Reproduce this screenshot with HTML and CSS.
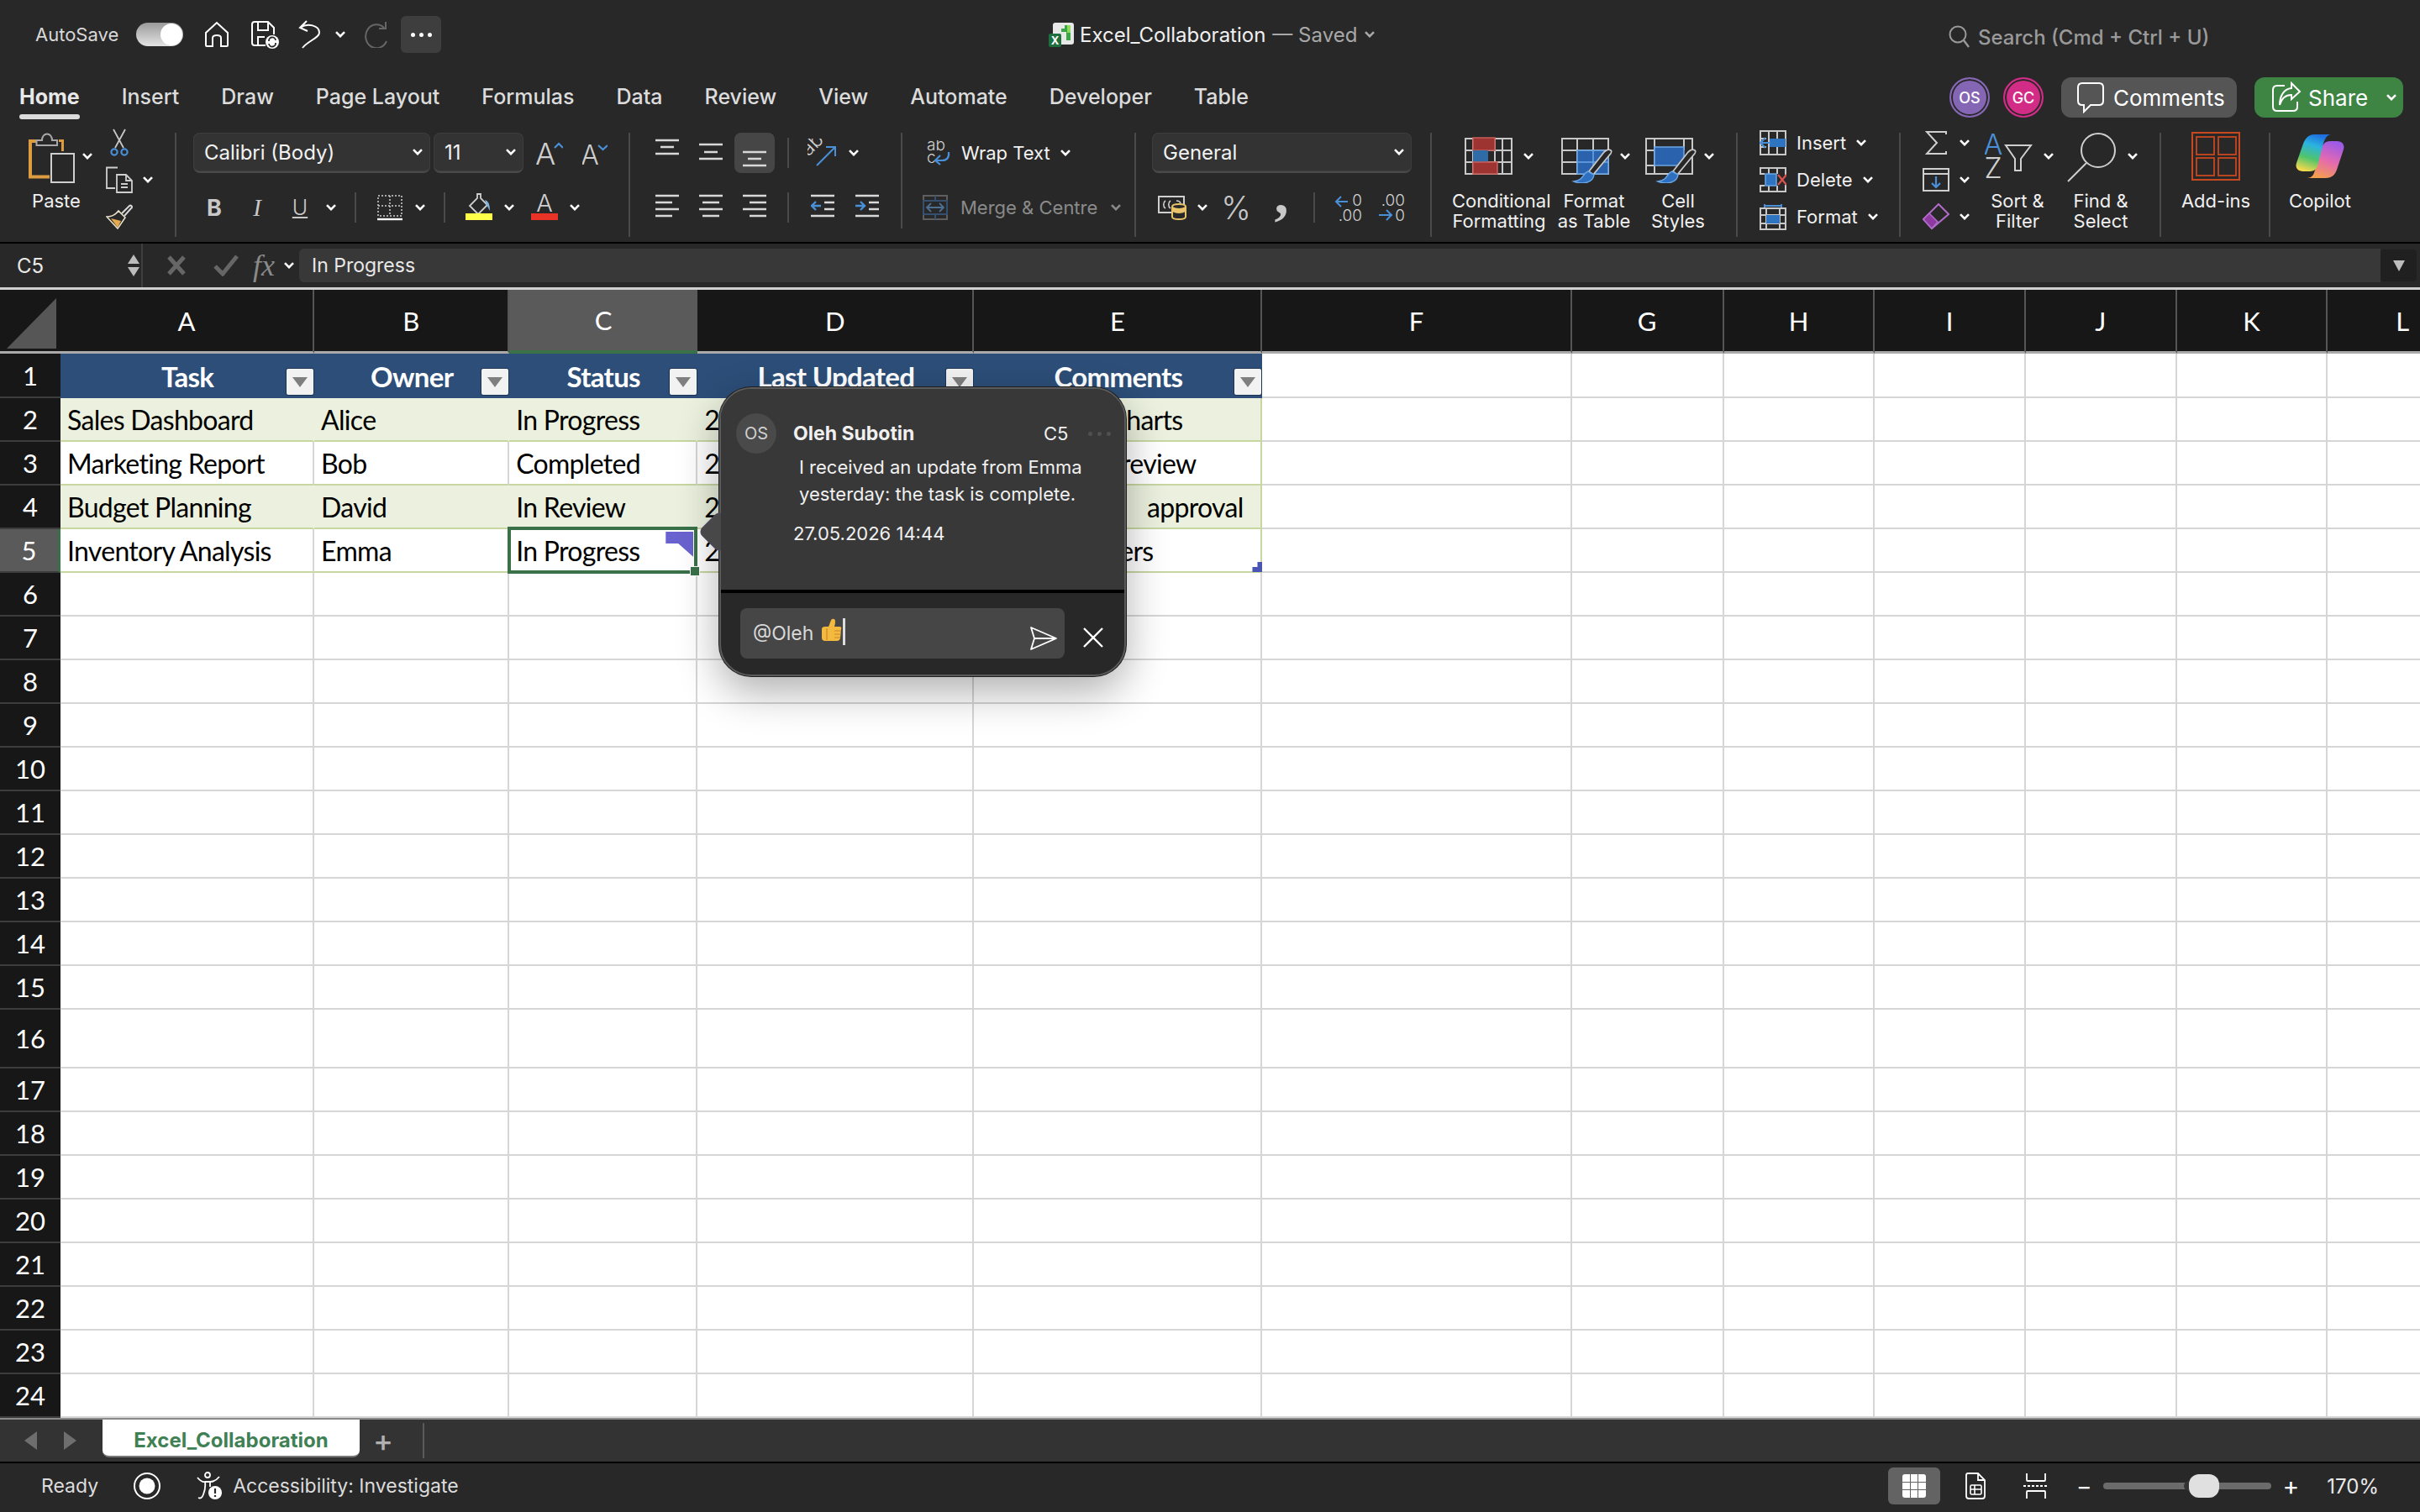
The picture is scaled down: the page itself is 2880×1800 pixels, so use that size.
FILE: index.html
```html
<!DOCTYPE html>
<html lang="en">
<head>
    <meta charset="UTF-8">
    <title>Excel_Collaboration</title>
    <link rel="stylesheet" href="styles.css">
</head>
<body>
    <svg class="defs">
        <symbol id="chev" viewBox="0 0 12 8"><path d="M1 1.2 L6 6.2 L11 1.2" fill="none" stroke="currentColor" stroke-width="2.6"/></symbol>
    </svg>

    <!-- title bar -->
    <header class="titlebar">
        <div class="qat">
            <span class="autosave">AutoSave</span>
            <span class="toggle"></span>
            <svg class="q-home" width="30" height="32" viewBox="0 0 30 32"><path d="M2 14 L15 2 L28 14 V29 Q28 30 27 30 H20 V20 Q20 17 15 17 Q10 17 10 20 V30 H3 Q2 30 2 29 Z" fill="none" stroke="#fff" stroke-width="2"/></svg>
            <svg class="q-save" width="34" height="34" viewBox="0 0 34 34"><path d="M18 30 H5 Q2 30 2 27 V5 Q2 2 5 2 H21 L28 9 V17 M9 2 V12 H21 V2 M9 30 V20 H17" fill="none" stroke="#fff" stroke-width="2"/><circle cx="26" cy="26" r="8" fill="#fff"/><path d="M22 25 A4 4 0 0 1 30 24 M30 27 A4 4 0 0 1 22 28" fill="none" stroke="#282828" stroke-width="1.8"/></svg>
            <svg class="q-undo" width="28" height="34" viewBox="0 0 28 34"><path d="M11 1 L3 9 L12 13 M3 9 C12 3 26 6 26 15 C26 21 12 25 6 33" fill="none" stroke="#fff" stroke-width="2"/></svg>
            <svg class="chev q-chev"><use href="#chev"/></svg>
            <svg class="q-redo" width="30" height="32" viewBox="0 0 30 32"><path d="M24 8 A13 14 0 1 0 27 24 M26 1 V9 H18" fill="none" stroke="#666" stroke-width="2"/></svg>
            <span class="more"><i></i><i></i><i></i></span>
        </div>
        <div class="doc-title">
            <svg width="32" height="30" viewBox="0 0 32 30"><rect x="6" y="1" width="25" height="26" rx="3" fill="#e8e8e8"/><path d="M20 4 H27 V22 H22 V12 H16 V8 H20 Z" fill="#3aa648"/><path d="M23 4 H27 V13 H23 Z" fill="#8fdc5a"/><rect x="1" y="14" width="15" height="16" rx="2" fill="#1e6e3e"/><text class="doc-x" x="8.5" y="27">X</text></svg>
            <span class="doc-name">Excel_Collaboration</span>
            <span class="doc-saved">— Saved</span>
            <svg class="chev doc-chev"><use href="#chev"/></svg>
        </div>
        <div class="search">
            <svg width="26" height="28" viewBox="0 0 26 28"><circle cx="11" cy="11" r="9.5" fill="none" stroke="#9a9a9a" stroke-width="2"/><path d="M18 18 L24 26" stroke="#9a9a9a" stroke-width="2.4"/></svg>
            <span>Search (Cmd + Ctrl + U)</span>
        </div>
    </header>

    <!-- tabs -->
    <nav class="tabs">
        <span class="tab tab-on">Home</span>
        <span class="tab">Insert</span>
        <span class="tab">Draw</span>
        <span class="tab">Page Layout</span>
        <span class="tab">Formulas</span>
        <span class="tab">Data</span>
        <span class="tab">Review</span>
        <span class="tab">View</span>
        <span class="tab">Automate</span>
        <span class="tab">Developer</span>
        <span class="tab">Table</span>
        <div class="tabs-right">
            <span class="avatar av-os">OS</span>
            <span class="avatar av-gc">GC</span>
            <span class="btn-comments">
                <svg width="34" height="38" viewBox="0 0 34 38"><path d="M7 2 H27 Q32 2 32 7 V23 Q32 28 27 28 H17 L9 36 V28 H7 Q2 28 2 23 V7 Q2 2 7 2 Z" fill="none" stroke="#fff" stroke-width="2"/></svg>
                Comments
            </span>
            <span class="btn-share">
                <svg width="36" height="38" viewBox="0 0 36 38"><path d="M16 5 H7 Q2 5 2 10 V30 Q2 35 7 35 H26 Q31 35 31 30 V24" fill="none" stroke="#fff" stroke-width="2"/><path d="M24 2 L34 12 L24 21 V16 C16 16 12 21 10 28 C10 17 15 9 24 8 Z" fill="none" stroke="#fff" stroke-width="2"/></svg>
                Share
                <svg class="chev share-chev"><use href="#chev"/></svg>
            </span>
        </div>
    </nav>

    <!-- ribbon -->
    <section class="ribbon">
        <div class="group g-clip">
            <div class="big big-paste">
                <div class="big-ic">
                    <svg width="56" height="64" viewBox="0 0 56 64"><path d="M10 14 H2 V56.5 H25" fill="none" stroke="#dd9c3f" stroke-width="4"/><path d="M36 13.5 H40.500 V26" fill="none" stroke="#dd9c3f" stroke-width="3"/><path d="M9.500 19 V13 H16 C16 3 28 3 28 13 H34 V19 Z" fill="none" stroke="#a8a8a8" stroke-width="2"/><rect x="27" y="29" width="27" height="34" fill="#282828" stroke="#cfcfcf" stroke-width="2"/></svg>
                    <svg class="chev paste-chev"><use href="#chev"/></svg>
                </div>
                <div class="big-lb">Paste</div>
            </div>
            <div class="clip-tools">
                <div class="clip-row">
                    <span class="clip-ic"><svg width="24" height="34" viewBox="0 0 24 34"><path d="M5 1 L17 23 M19 1 L7 23" stroke="#c8c8c8" stroke-width="1.8"/><circle cx="6" cy="28" r="3.600" fill="none" stroke="#4a90d9" stroke-width="2.200"/><circle cx="18" cy="28" r="3.600" fill="none" stroke="#4a90d9" stroke-width="2.200"/></svg></span>
                </div>
                <div class="clip-row">
                    <span class="clip-ic"><svg width="32" height="32" viewBox="0 0 32 32"><path d="M14 1.500 H1 V26 H11 M13 10 H24 L31 17 V31 H13 Z M24 10 V17 H31 M18 21 H26 M18 25 H26" fill="none" stroke="#cfcfcf" stroke-width="1.800"/></svg></span>
                    <svg class="chev"><use href="#chev"/></svg>
                </div>
                <div class="clip-row">
                    <span class="clip-ic"><svg width="32" height="30" viewBox="0 0 32 30"><path d="M1 15 C8 15 12 12 15 8 L23 16 C20 20 18 24 14 29 Z" fill="#282828" stroke="#e8e0c8" stroke-width="1.600"/><path d="M6 17 L18 20 L14 28 Z" fill="#e3a94c"/><path d="M19 11 L28 2 Q30 1 31 3 Q31 5 30 5 L22 14" fill="none" stroke="#d8d8d8" stroke-width="2"/></svg></span>
                </div>
            </div>
        </div>

        <div class="group g-font">
            <div class="r1">
                <span class="select sel-font">Calibri (Body)<svg class="chev"><use href="#chev"/></svg></span>
                <span class="select sel-size">11<svg class="chev"><use href="#chev"/></svg></span>
                <svg class="grow" width="32" height="36" viewBox="0 0 32 36"><text class="ict-a" x="11" y="32">A</text><path d="M22 12 L27 7 L32 12" fill="none" stroke="#4a90d9" stroke-width="2.200"/></svg>
                <svg class="shrink" width="30" height="32" viewBox="0 0 30 32"><text class="ict-a2" x="9" y="30">A</text><path d="M19 7 L24.500 12 L30 7" fill="none" stroke="#4a90d9" stroke-width="2.200"/></svg>
            </div>
            <div class="r2">
                <span class="tb w50 t-b">B</span>
                <span class="tb w52 t-i">I</span>
                <span class="tb w50 t-u"><u>U</u></span>
                <span class="tb w24"><svg class="chev"><use href="#chev"/></svg></span>
                <span class="tb w34"><i class="vsep"></i></span>
                <span class="tb w48"><svg width="30" height="32" viewBox="0 0 30 32"><path d="M1 2 H29 V26 H1 Z M15 2 V26 M1 14 H29" fill="none" stroke="#cfcfcf" stroke-width="1.500" stroke-dasharray="2 2"/><path d="M0 30 H30" stroke="#fff" stroke-width="2.400"/></svg></span>
                <span class="tb w24"><svg class="chev"><use href="#chev"/></svg></span>
                <span class="tb w34"><i class="vsep"></i></span>
                <span class="tb w48"><svg width="32" height="34" viewBox="0 0 32 34"><path d="M14 1 H18 V6 L26 14 L15 25 L5 15 L14 6 Z" fill="none" stroke="#cfcfcf" stroke-width="1.800"/><path d="M23 8 Q29 9 29 21 Q25 15 23 8 Z" fill="#7fb3e0"/><rect y="24" width="32" height="8" fill="#ffff4a"/></svg></span>
                <span class="tb w24"><svg class="chev"><use href="#chev"/></svg></span>
                <span class="tb w52 mg4"><svg width="32" height="34" viewBox="0 0 32 34"><text class="ict-a3" x="16" y="22">A</text><rect y="24" width="32" height="8" fill="#e93326"/></svg></span>
                <span class="tb w24 mg-4"><svg class="chev"><use href="#chev"/></svg></span>
            </div>
        </div>

        <div class="group g-align">
            <div class="r1">
                <span class="tb-h w52"><svg width="28" height="48" viewBox="0 0 28 48"><path d="M0 9 H28 M6 17 H22 M0 25 H28" stroke="#d8d8d8" stroke-width="2.400"/></svg></span>
                <span class="tb-h w52"><svg width="28" height="48" viewBox="0 0 28 48"><path d="M0 14 H28 M6 23 H22 M0 31 H28" stroke="#d8d8d8" stroke-width="2.400"/></svg></span>
                <span class="tb-h w52"><span class="active"><svg width="28" height="48" viewBox="0 0 28 48"><path d="M0 23 H28 M6 31 H22 M0 39 H28" stroke="#d8d8d8" stroke-width="2.400"/></svg></span></span>
                <span class="tb-h w28"><i class="vsep"></i></span>
                <span class="tb-h w52"><svg width="34" height="34" viewBox="0 0 34 34"><text class="ict-ab" transform="translate(1 22) rotate(-45)">ab</text><path d="M11 32 L32 11 M22 10 H33 V21" fill="none" stroke="#4a90d9" stroke-width="2"/></svg></span>
                <span class="tb-h w24"><svg class="chev"><use href="#chev"/></svg></span>
            </div>
            <div class="r2">
                <span class="tb w52"><svg width="28" height="46" viewBox="0 0 28 46"><path d="M0 9 H28 M0 17 H20 M0 25 H28 M0 33 H20" stroke="#d8d8d8" stroke-width="2.400"/></svg></span>
                <span class="tb w52"><svg width="28" height="46" viewBox="0 0 28 46"><path d="M0 9 H28 M4 17 H24 M0 25 H28 M4 33 H24" stroke="#d8d8d8" stroke-width="2.400"/></svg></span>
                <span class="tb w52"><svg width="28" height="46" viewBox="0 0 28 46"><path d="M0 9 H28 M8 17 H28 M0 25 H28 M8 33 H28" stroke="#d8d8d8" stroke-width="2.400"/></svg></span>
                <span class="tb w28"><i class="vsep"></i></span>
                <span class="tb w54"><svg width="28" height="46" viewBox="0 0 28 46"><path d="M0 9 H28 M16 17 H28 M16 25 H28 M0 33 H28" stroke="#d8d8d8" stroke-width="2.400"/><path d="M12 21 H1 M6 16 L1 21 L6 26" fill="none" stroke="#4a90d9" stroke-width="2.400"/></svg></span>
                <span class="tb w52"><svg width="28" height="46" viewBox="0 0 28 46"><path d="M0 9 H28 M16 17 H28 M16 25 H28 M0 33 H28" stroke="#d8d8d8" stroke-width="2.400"/><path d="M0 21 H11 M6 16 L11 21 L6 26" fill="none" stroke="#4a90d9" stroke-width="2.400"/></svg></span>
            </div>
        </div>

        <div class="group g-wrap">
            <div class="wrap-row wr-1">
                <svg width="28" height="30" viewBox="0 0 28 30"><text class="ict-wrap" x="0" y="12">ab</text><text class="ict-wrap" x="0" y="27">c</text><path d="M26 14 Q27 24 18 24 H11 M16 18 L10 24 L16 29" fill="none" stroke="#4a90d9" stroke-width="2.200"/></svg>
                <span>Wrap Text</span>
                <svg class="chev"><use href="#chev"/></svg>
            </div>
            <div class="wrap-row wr-2">
                <svg width="30" height="30" viewBox="0 0 30 30"><rect x="1" y="1" width="28" height="28" fill="none" stroke="#5e5e5e" stroke-width="2"/><path d="M15 1 V7 M15 23 V29 M1 7 H29 V23 H1 Z" fill="none" stroke="#35506e" stroke-width="2"/><path d="M5 15 H25 M10 10 L5 15 L10 20 M20 10 L25 15 L20 20" fill="none" stroke="#4c6f94" stroke-width="1.800"/></svg>
                <span>Merge &amp; Centre</span>
                <svg class="chev"><use href="#chev"/></svg>
            </div>
        </div>

        <div class="group g-num">
            <div class="r1">
                <span class="select sel-num">General<svg class="chev"><use href="#chev"/></svg></span>
            </div>
            <div class="r2">
                <span class="tb w48"><svg width="34" height="30" viewBox="0 0 34 30"><rect x="1" y="2" width="30" height="19" fill="none" stroke="#cfcfcf" stroke-width="2"/><path d="M9 7 A4 5 0 0 0 9 16 M15 7 A4 5 0 0 0 15 16 M22 7 Q26 7 27 10" fill="none" stroke="#cfcfcf" stroke-width="1.600"/><path d="M17 14 Q17 11 25 11 Q33 11 33 14 V26 Q33 29 25 29 Q17 29 17 26 Z" fill="#282828" stroke="#e8c36a" stroke-width="2"/><path d="M17 14 Q25 18 33 14 V20 Q25 24 17 20 Z" fill="#e8c36a"/></svg></span>
                <span class="tb w24"><svg class="chev"><use href="#chev"/></svg></span>
                <span class="tb w56 t-pct">%</span>
                <span class="tb w52 t-comma">,</span>
                <span class="tb w26"><i class="vsep"></i></span>
                <span class="tb w56"><svg width="34" height="34" viewBox="0 0 34 34"><text class="ict-dec" x="33" y="15" text-anchor="end">0</text><text class="ict-dec" x="33" y="33" text-anchor="end">.00</text><path d="M16 10 H2 M8 4 L2 10 L8 16" fill="none" stroke="#4a90d9" stroke-width="2"/></svg></span>
                <span class="tb w46"><svg width="34" height="34" viewBox="0 0 34 34"><text class="ict-dec" x="33" y="15" text-anchor="end">.00</text><text class="ict-dec" x="33" y="33" text-anchor="end">0</text><path d="M2 26 H17 M11 20 L17 26 L11 32" fill="none" stroke="#4a90d9" stroke-width="2"/></svg></span>
            </div>
        </div>

        <div class="group g-styles">
            <div class="big big-cf">
                <div class="big-ic">
                    <svg width="58" height="64" viewBox="0 0 58 64"><path d="M1 11 H56 V53 H1 Z M10 11 V53 M36 11 V53 M45 11 V53 M1 25 H56 M1 39 H56" fill="none" stroke="#c8c8c8" stroke-width="2"/><rect x="10" y="10" width="26" height="15" fill="#9d3431" stroke="#c85f5a" stroke-width="1.500"/><rect x="10" y="25" width="18" height="14" fill="#2f6ba6"/><rect x="10" y="39" width="29" height="14" fill="#9d3431" stroke="#c85f5a" stroke-width="1.500"/></svg>
                    <svg class="chev"><use href="#chev"/></svg>
                </div>
                <div class="big-lb">Conditional<br>Formatting</div>
            </div>
            <div class="big big-fat">
                <div class="big-ic">
                    <svg width="62" height="64" viewBox="0 0 62 64"><path d="M1 11 H56 V53 H1 Z M19 11 V53 M38 11 V53 M1 25 H56 M1 39 H56" fill="none" stroke="#c8c8c8" stroke-width="2"/><rect x="19" y="25" width="37" height="28" fill="#2a62ad" stroke="#6aa7e6" stroke-width="1.500"/><path d="M19 39 H56 M38 25 V53" stroke="#6aa7e6" stroke-width="1.500"/><path d="M59 25 C56 23 53 25 51 27 L33 50 L38 54 L57 31 C59 29 61 27 59 25 Z" fill="#282828" stroke="#c8c8c8" stroke-width="1.800"/><path d="M32 50 C25 52 28 60 15 62 C25 66 38 64 39 54 Z" fill="#2f6fc0" stroke="#6aa7e6" stroke-width="1.500"/></svg>
                    <svg class="chev"><use href="#chev"/></svg>
                </div>
                <div class="big-lb">Format<br>as Table</div>
            </div>
            <div class="big big-fat">
                <div class="big-ic">
                    <svg width="62" height="64" viewBox="0 0 62 64"><path d="M1 11 H56 V53 H1 Z M11 11 V53 M46 11 V25 M1 25 H11 M1 43 H11" fill="none" stroke="#c8c8c8" stroke-width="2"/><rect x="11" y="21" width="35" height="22" fill="#2a62ad" stroke="#6aa7e6" stroke-width="1.500"/><path d="M59 25 C56 23 53 25 51 27 L33 50 L38 54 L57 31 C59 29 61 27 59 25 Z" fill="#282828" stroke="#c8c8c8" stroke-width="1.800"/><path d="M32 50 C25 52 28 60 15 62 C25 66 38 64 39 54 Z" fill="#2f6fc0" stroke="#6aa7e6" stroke-width="1.500"/></svg>
                    <svg class="chev"><use href="#chev"/></svg>
                </div>
                <div class="big-lb">Cell<br>Styles</div>
            </div>
        </div>

        <div class="group g-cells">
            <div class="cell-row">
                <svg width="32" height="30" viewBox="0 0 32 30"><path d="M1 1 H31 V29 H1 Z M11 1 V29 M21 1 V29 M1 10 H8 M1 20 H8" fill="none" stroke="#c8c8c8" stroke-width="2"/><rect x="12" y="10" width="19" height="10" fill="#2f74c0"/><path d="M13 15 H1 M7 9 L1 15 L7 21" fill="#282828" stroke="#4a90d9" stroke-width="2.200"/></svg>
                <span>Insert</span>
                <svg class="chev"><use href="#chev"/></svg>
            </div>
            <div class="cell-row">
                <svg width="32" height="30" viewBox="0 0 32 30"><path d="M1 9 V1 H31 V9 M1 21 V29 H31 V21 M11 1 V8 M21 1 V8 M11 22 V29 M21 22 V29 M1 8 H6 M1 22 H6" fill="none" stroke="#c8c8c8" stroke-width="2"/><rect x="7" y="8" width="13" height="14" fill="#2f74c0" stroke="#6aa7e6" stroke-width="1.500"/><path d="M22 9 L32 21 M32 9 L22 21" stroke="#d9524c" stroke-width="2.200"/></svg>
                <span>Delete</span>
                <svg class="chev"><use href="#chev"/></svg>
            </div>
            <div class="cell-row">
                <svg width="32" height="32" viewBox="0 0 32 32"><path d="M1 6 H31 V31 H1 Z M8 6 V31 M24 6 V31 M1 14 H31 M1 24 H31" fill="none" stroke="#c8c8c8" stroke-width="2"/><rect x="8" y="14" width="16" height="10" fill="#2f74c0"/><path d="M6 1 V5 M26 1 V5 M6 3 H26" stroke="#4a90d9" stroke-width="2"/></svg>
                <span>Format</span>
                <svg class="chev"><use href="#chev"/></svg>
            </div>
        </div>

        <div class="group g-edit">
            <div class="edit-col">
                <div class="edit-row">
                    <span class="edit-ic"><svg width="26" height="30" viewBox="0 0 26 30"><path d="M25 5 V2 H2 L14 15 L2 28 H25 V25" fill="none" stroke="#cfcfcf" stroke-width="2"/></svg></span>
                    <svg class="chev"><use href="#chev"/></svg>
                </div>
                <div class="edit-row">
                    <span class="edit-ic"><svg width="32" height="28" viewBox="0 0 32 28"><rect x="1" y="1" width="30" height="26" fill="none" stroke="#cfcfcf" stroke-width="2"/><path d="M1 7 H31" stroke="#cfcfcf" stroke-width="2"/><path d="M16 10 V23 M11 18 L16 23 L21 18" fill="none" stroke="#4a90d9" stroke-width="2.200"/></svg></span>
                    <svg class="chev"><use href="#chev"/></svg>
                </div>
                <div class="edit-row">
                    <span class="edit-ic"><svg width="32" height="32" viewBox="0 0 32 32"><path d="M19 1 L31 13 L11 30 L1 19 Z" fill="none" stroke="#b06cc8" stroke-width="2"/><path d="M1 19 L8 12 L18 22 L11 30 Z" fill="#8e3aa0" stroke="#b06cc8" stroke-width="1.500"/></svg></span>
                    <svg class="chev"><use href="#chev"/></svg>
                </div>
            </div>
            <div class="big big-sort">
                <div class="big-ic">
                    <svg width="58" height="64" viewBox="0 0 58 64"><text class="ict-az" x="10" y="30">A</text><text class="ict-z" x="10" y="58">Z</text><path d="M25 19 H55 L43 35 V49 H36 V35 Z" fill="none" stroke="#cfcfcf" stroke-width="2"/></svg>
                    <svg class="chev"><use href="#chev"/></svg>
                </div>
                <div class="big-lb">Sort &amp;<br>Filter</div>
            </div>
            <div class="big big-find">
                <div class="big-ic">
                    <svg width="60" height="64" viewBox="0 0 60 64"><circle cx="37" cy="25" r="20" fill="none" stroke="#cfcfcf" stroke-width="2"/><path d="M23 40 L1 62" stroke="#cfcfcf" stroke-width="2"/></svg>
                    <svg class="chev"><use href="#chev"/></svg>
                </div>
                <div class="big-lb">Find &amp;<br>Select</div>
            </div>
        </div>

        <div class="group g-addins">
            <div class="big big-one">
                <div class="big-ic">
                    <svg width="58" height="64" viewBox="0 0 58 64"><rect x="1" y="4" width="56" height="56" fill="none" stroke="#c8481f" stroke-width="2"/><rect x="6" y="9" width="21" height="21" fill="none" stroke="#c8481f" stroke-width="1.800"/><rect x="32" y="9" width="21" height="21" fill="none" stroke="#c8481f" stroke-width="1.800"/><rect x="6" y="34" width="21" height="21" fill="none" stroke="#c8481f" stroke-width="1.800"/><rect x="32" y="34" width="21" height="21" fill="none" stroke="#c8481f" stroke-width="1.800"/></svg>
                </div>
                <div class="big-lb">Add-ins</div>
            </div>
        </div>

        <div class="group g-copilot">
            <div class="big big-one">
                <div class="big-ic">
                    <svg width="60" height="64" viewBox="0 0 60 64">
                        <defs>
                            <linearGradient id="cpa" x1="0.600" y1="0" x2="0.300" y2="1"><stop offset="0" stop-color="#1e6fe0"/><stop offset="0.300" stop-color="#2bb3e0"/><stop offset="0.650" stop-color="#4fc46c"/><stop offset="1" stop-color="#f6d94a"/></linearGradient>
                            <linearGradient id="cpb" x1="0.700" y1="0" x2="0.300" y2="1"><stop offset="0" stop-color="#9a5ae8"/><stop offset="0.500" stop-color="#e46ab0"/><stop offset="1" stop-color="#f5a04a"/></linearGradient>
                        </defs>
                        <path d="M36 58 C46 58 49 52 51 45 L58 24 C60 18 56 14 50 14 L42 14 C36 14 33 18 31 24 L25 45 C23 52 22 58 14 58 Z" fill="url(#cpb)"/>
                        <path d="M24 6 C14 6 11 14 9 20 L2 40 C0 46 4 50 10 50 L18 50 C24 50 27 46 28 40 L33 20 C35 14 37 6 44 6 Z" fill="url(#cpa)"/>
                    </svg>
                </div>
                <div class="big-lb">Copilot</div>
            </div>
        </div>
    </section>

    <!-- formula bar -->
    <section class="formula">
        <div class="namebox">
            <span>C5</span>
            <span class="spin"><i class="spin-up"></i><i class="spin-down"></i></span>
        </div>
        <svg class="f-x" width="22" height="24" viewBox="0 0 22 24"><path d="M2 2 L20 22 M20 2 L2 22" stroke="#666" stroke-width="5"/></svg>
        <svg class="f-ok" width="30" height="26" viewBox="0 0 30 26"><path d="M2 14 L11 23 L28 2" fill="none" stroke="#666" stroke-width="5"/></svg>
        <span class="f-fx">fx</span>
        <svg class="chev f-chev"><use href="#chev"/></svg>
        <div class="f-input">In Progress</div>
        <span class="f-expand"><i></i></span>
    </section>
    <div class="formula-line"></div>

    <!-- sheet -->
    <main class="sheet">
        <table class="grid">
            <colgroup>
                <col class="c-rh"><col class="c-a"><col class="c-b"><col class="c-c"><col class="c-d"><col class="c-e"><col class="c-f"><col class="c-g"><col class="c-n"><col class="c-n"><col class="c-n"><col class="c-n"><col class="c-n">
            </colgroup>
            <tr class="heads">
                <th class="corner"><svg width="60" height="60" viewBox="0 0 60 60"><path d="M59 0 V60 H0 Z" fill="#565656"/></svg></th>
                <th>A</th><th>B</th><th class="h-sel">C</th><th>D</th><th>E</th><th>F</th><th>G</th><th>H</th><th>I</th><th>J</th><th>K</th><th>L</th>
            </tr>
            <tr class="row1">
                <th class="rh">1</th>
                <td class="hc">Task<span class="filter"></span></td>
                <td class="hc">Owner<span class="filter"></span></td>
                <td class="hc">Status<span class="filter"></span></td>
                <td class="hc">Last Updated<span class="filter"></span></td>
                <td class="hc">Comments<span class="filter"></span></td>
                <td></td><td></td><td></td><td></td><td></td><td></td><td></td>
            </tr>
            <tr class="band">
                <th class="rh">2</th><td>Sales Dashboard</td><td>Alice</td><td>In Progress</td><td>2</td><td class="e e-1">charts</td>
                <td></td><td></td><td></td><td></td><td></td><td></td><td></td>
            </tr>
            <tr class="plain">
                <th class="rh">3</th><td>Marketing Report</td><td>Bob</td><td>Completed</td><td>2</td><td class="e e-2">review</td>
                <td></td><td></td><td></td><td></td><td></td><td></td><td></td>
            </tr>
            <tr class="band">
                <th class="rh">4</th><td>Budget Planning</td><td>David</td><td>In Review</td><td>2</td><td class="e e-3">approval</td>
                <td></td><td></td><td></td><td></td><td></td><td></td><td></td>
            </tr>
            <tr class="plain">
                <th class="rh rh-sel">5</th><td>Inventory Analysis</td><td>Emma</td>
                <td class="cur">In Progress<span class="cur-box"></span><span class="cur-note"></span><span class="cur-handle"></span></td>
                <td>2</td><td class="e e-4">numbers<span class="tbl-end"></span></td>
                <td></td><td></td><td></td><td></td><td></td><td></td><td></td>
            </tr>
            <tr><th class="rh">6</th><td></td><td></td><td></td><td></td><td></td><td></td><td></td><td></td><td></td><td></td><td></td><td></td></tr>
            <tr><th class="rh">7</th><td></td><td></td><td></td><td></td><td></td><td></td><td></td><td></td><td></td><td></td><td></td><td></td></tr>
            <tr><th class="rh">8</th><td></td><td></td><td></td><td></td><td></td><td></td><td></td><td></td><td></td><td></td><td></td><td></td></tr>
            <tr><th class="rh">9</th><td></td><td></td><td></td><td></td><td></td><td></td><td></td><td></td><td></td><td></td><td></td><td></td></tr>
            <tr><th class="rh">10</th><td></td><td></td><td></td><td></td><td></td><td></td><td></td><td></td><td></td><td></td><td></td><td></td></tr>
            <tr><th class="rh">11</th><td></td><td></td><td></td><td></td><td></td><td></td><td></td><td></td><td></td><td></td><td></td><td></td></tr>
            <tr><th class="rh">12</th><td></td><td></td><td></td><td></td><td></td><td></td><td></td><td></td><td></td><td></td><td></td><td></td></tr>
            <tr><th class="rh">13</th><td></td><td></td><td></td><td></td><td></td><td></td><td></td><td></td><td></td><td></td><td></td><td></td></tr>
            <tr><th class="rh">14</th><td></td><td></td><td></td><td></td><td></td><td></td><td></td><td></td><td></td><td></td><td></td><td></td></tr>
            <tr><th class="rh">15</th><td></td><td></td><td></td><td></td><td></td><td></td><td></td><td></td><td></td><td></td><td></td><td></td></tr>
            <tr class="row16"><th class="rh">16</th><td></td><td></td><td></td><td></td><td></td><td></td><td></td><td></td><td></td><td></td><td></td><td></td></tr>
            <tr><th class="rh">17</th><td></td><td></td><td></td><td></td><td></td><td></td><td></td><td></td><td></td><td></td><td></td><td></td></tr>
            <tr><th class="rh">18</th><td></td><td></td><td></td><td></td><td></td><td></td><td></td><td></td><td></td><td></td><td></td><td></td></tr>
            <tr><th class="rh">19</th><td></td><td></td><td></td><td></td><td></td><td></td><td></td><td></td><td></td><td></td><td></td><td></td></tr>
            <tr><th class="rh">20</th><td></td><td></td><td></td><td></td><td></td><td></td><td></td><td></td><td></td><td></td><td></td><td></td></tr>
            <tr><th class="rh">21</th><td></td><td></td><td></td><td></td><td></td><td></td><td></td><td></td><td></td><td></td><td></td><td></td></tr>
            <tr><th class="rh">22</th><td></td><td></td><td></td><td></td><td></td><td></td><td></td><td></td><td></td><td></td><td></td><td></td></tr>
            <tr><th class="rh">23</th><td></td><td></td><td></td><td></td><td></td><td></td><td></td><td></td><td></td><td></td><td></td><td></td></tr>
            <tr><th class="rh">24</th><td></td><td></td><td></td><td></td><td></td><td></td><td></td><td></td><td></td><td></td><td></td><td></td></tr>
        </table>

        <!-- comment popup, floats over the grid -->
        <div class="popup">
            <div class="pop-top">
                <div class="pop-head">
                    <span class="pop-av">OS</span>
                    <span class="pop-name">Oleh Subotin</span>
                    <span class="pop-cell">C5</span>
                    <span class="pop-dots"><i></i><i></i><i></i></span>
                </div>
                <p class="pop-body">I received an update from Emma<br>yesterday: the task is complete.</p>
                <p class="pop-date">27.05.2026 14:44</p>
            </div>
            <div class="pop-bottom">
                <div class="pop-input">
                    <span>@Oleh</span>
                    <svg class="thumb" width="26" height="28" viewBox="0 0 26 28"><path d="M2 13 Q2 10 6 10 H10 C12 6 12 3 14 1 Q18 0 18 4 Q18 7 17 10 H23 Q26 10 25 13 L24 24 Q23 27 20 27 H6 Q2 27 2 23 Z" fill="#f4b93f"/><path d="M8 12 V26 M17 15 H25 M17 19 H25 M17 23 H24" stroke="#c8862a" stroke-width="1.200" fill="none"/></svg>
                    <i class="caret"></i>
                    <svg class="send" width="34" height="30" viewBox="0 0 34 30"><path d="M2 2 L32 15 L2 28 L6 15 Z M6 15 H32" fill="none" stroke="#fff" stroke-width="1.800" stroke-linejoin="round"/></svg>
                </div>
                <svg class="pop-close" width="26" height="26" viewBox="0 0 26 26"><path d="M2 2 L24 24 M24 2 L2 24" stroke="#fff" stroke-width="2.400"/></svg>
            </div>
        </div>
    </main>

    <!-- sheet tabs -->
    <section class="sheettabs">
        <i class="arrow-l"></i>
        <i class="arrow-r"></i>
        <span class="sheet-tab">Excel_Collaboration</span>
        <span class="sheet-add">+</span>
        <i class="sheet-sep"></i>
    </section>

    <!-- status bar -->
    <footer class="status">
        <span class="st-ready">Ready</span>
        <svg class="st-rec" width="32" height="32" viewBox="0 0 32 32"><circle cx="16" cy="16" r="15" fill="none" stroke="#fff" stroke-width="2"/><circle cx="16" cy="16" r="9.500" fill="#fff"/></svg>
        <svg class="st-acc" width="32" height="34" viewBox="0 0 32 34"><circle cx="14" cy="4" r="3" fill="none" stroke="#fff" stroke-width="1.800"/><path d="M2 7 Q7 13 11 12 H17 Q23 12 28 6 M11 12 Q12 20 9 27 Q7 33 3 31 M17 12 V18" fill="none" stroke="#fff" stroke-width="1.800"/><circle cx="23" cy="25" r="8" fill="#fff"/><path d="M23 20 V26 M23 28 V30" stroke="#282828" stroke-width="2.200"/></svg>
        <span class="st-text">Accessibility: Investigate</span>
        <div class="st-right">
            <span class="view-on"><svg width="28" height="28" viewBox="0 0 28 28"><path d="M3 0 H9 V9 H0 V3 Q0 0 3 0 Z M10 0 H18 V9 H10 Z M19 0 H25 Q28 0 28 3 V9 H19 Z M0 10 H9 V18 H0 Z M10 10 H18 V18 H10 Z M19 10 H28 V18 H19 Z M0 19 H9 V28 H3 Q0 28 0 25 Z M10 19 H18 V28 H10 Z M19 19 H28 V25 Q28 28 25 28 H19 Z" fill="#fff"/></svg></span>
            <svg class="view-page" width="24" height="32" viewBox="0 0 24 32"><path d="M3 1 H15 L23 9 V28 Q23 31 20 31 H4 Q1 31 1 28 V3 Q1 1 3 1 Z M15 1 V9 H23" fill="none" stroke="#fff" stroke-width="1.800"/><rect x="6" y="15" width="13" height="11" rx="1.500" fill="none" stroke="#fff" stroke-width="1.600"/><path d="M6 20 H19 M11 15 V26" stroke="#fff" stroke-width="1.600"/></svg>
            <svg class="view-break" width="30" height="32" viewBox="0 0 30 32"><path d="M4 1 V9 Q4 10 5 10 H25 Q26 10 26 9 V1 M4 31 V23 Q4 22 5 22 H25 Q26 22 26 23 V31" fill="none" stroke="#fff" stroke-width="1.800"/><path d="M0 16 H30" stroke="#fff" stroke-width="2" stroke-dasharray="3 2"/></svg>
            <span class="zoom-minus">−</span>
            <span class="zoom-track"><i class="zoom-tick"></i><i class="zoom-thumb"></i></span>
            <span class="zoom-plus">+</span>
            <span class="zoom-val">170%</span>
        </div>
    </footer>
</body>
</html>
```

FILE: styles.css
```css
* {
    box-sizing: border-box;
}
html, body {
    margin: 0;
    padding: 0;
}
body {
    width: 2880px;
    height: 1800px;
    overflow: hidden;
    background: #282828;
    color: #ececec;
    font-family: Inter, "Noto Sans", sans-serif;
    font-size: 22px;
}
.defs {
    display: none;
}
svg {
    display: block;
    flex: none;
}
.chev {
    width: 12px;
    height: 8px;
    color: #fff;
    flex: none;
}
i {
    display: block;
}

/* ---- title bar ---- */
.titlebar {
    display: flex;
    align-items: center;
    height: 82px;
}
.qat {
    display: flex;
    align-items: center;
    width: 1247px;
    padding-left: 42px;
}
.autosave {
    width: 120px;
    font-size: 22px;
    color: #d8d8d8;
}
.toggle {
    position: relative;
    width: 56px;
    height: 28px;
    border-radius: 14px;
    background: linear-gradient(#9a9a9a, #e4e4e4);
}
.toggle::after {
    content: "";
    position: absolute;
    right: 1px;
    top: 1px;
    width: 26px;
    height: 26px;
    border-radius: 50%;
    background: #fff;
}
.q-home { margin-left: 25px; }
.q-save { margin-left: 25px; }
.q-undo { margin-left: 22px; }
.q-chev { margin-left: 17px; width: 12px; }
.q-redo { margin-left: 22px; }
.more {
    display: flex;
    align-items: center;
    justify-content: center;
    gap: 5px;
    width: 48px;
    height: 44px;
    margin-left: 14px;
    border-radius: 6px;
    background: #3e3e3e;
}
.more i {
    width: 5px;
    height: 5px;
    border-radius: 50%;
    background: #fff;
}
.doc-title {
    display: flex;
    align-items: center;
    width: 1072px;
    font-size: 24px;
}
.doc-name {
    margin-left: 6px;
    color: #f0f0f0;
}
.doc-saved {
    margin-left: 8px;
    color: #a8a8a8;
}
.doc-chev {
    margin-left: 9px;
    color: #a8a8a8;
}
.doc-x {
    font-size: 13px;
    font-weight: 700;
    fill: #fff;
    text-anchor: middle;
}
.search {
    display: flex;
    align-items: center;
    gap: 9px;
    margin-top: 6px;
    font-size: 24px;
    font-weight: 500;
    color: #9a9a9a;
}

/* ---- tabs ---- */
.tabs {
    position: relative;
    display: flex;
    align-items: center;
    gap: 50px;
    height: 68px;
    padding-left: 23px;
    font-size: 25px;
    font-weight: 500;
    color: #dcdcdc;
}
.tab {
    position: relative;
    top: -1px;
}
.tab-on {
    color: #e8e8e8;
    font-weight: 700;
}
.tab-on::after {
    content: "";
    position: absolute;
    left: 0;
    right: 0;
    bottom: -12px;
    height: 6px;
    border-radius: 3px;
    background: #dcdcdc;
}
.tabs-right {
    display: flex;
    align-items: center;
    margin-left: auto;
    padding-right: 20px;
}
.avatar {
    display: flex;
    align-items: center;
    justify-content: center;
    width: 48px;
    height: 48px;
    border-radius: 50%;
    font-size: 18px;
    color: #fff;
    border: 2px solid;
    box-shadow: inset 0 0 0 2px #282828;
}
.av-os {
    background: #8566b4;
    border-color: #8566b4;
}
.av-gc {
    margin-left: 16px;
    background: #d22c87;
    border-color: #d22c87;
}
.btn-comments {
    display: flex;
    align-items: center;
    gap: 10px;
    width: 209px;
    height: 48px;
    margin-left: 21px;
    padding-left: 18px;
    border-radius: 12px;
    background: #555;
    font-size: 26px;
    font-weight: 400;
    color: #fff;
}
.btn-share {
    display: flex;
    align-items: center;
    gap: 8px;
    width: 177px;
    height: 48px;
    margin-left: 21px;
    padding-left: 20px;
    border-radius: 12px;
    background: #3e8544;
    font-size: 26px;
    font-weight: 400;
    color: #fff;
}
.share-chev {
    margin-left: 14px;
}

/* ---- ribbon ---- */
.ribbon {
    display: flex;
    height: 138px;
}
.group {
    position: relative;
    flex: none;
}
.group::after {
    content: "";
    position: absolute;
    right: 0;
    top: 8px;
    width: 2px;
    height: 124px;
    background: #4a4a4a;
}
.g-clip { display: flex; width: 210px; }
.g-font { width: 540px; padding-left: 20px; }
.g-align { width: 324px; padding-left: 18px; }
.g-wrap { width: 278px; }
.g-num { width: 352px; padding-left: 19px; }
.g-styles { display: flex; width: 364px; padding-left: 24px; }
.g-cells { width: 194px; padding-top: 0; }
.g-edit { display: flex; width: 310px; }
.g-addins { width: 130px; }
.g-copilot { width: 118px; }
.g-align::after { height: 114px; }
.g-copilot::after { display: none; }

.big {
    flex: none;
}
.big-ic {
    display: flex;
    align-items: center;
    height: 72px;
}
.big-lb {
    margin-top: 5px;
    line-height: 24px;
    text-align: center;
    font-size: 22px;
    color: #f0f0f0;
}
.big-paste { width: 118px; padding-left: 16px; }
.big-paste .big-ic svg:first-child { margin-left: 18px; }
.paste-chev { margin-left: 8px; }
.big-cf { width: 112px; }
.big-cf .big-ic { padding-left: 15px; gap: 12px; }
.big-fat { width: 100px; }
.big-fat .big-ic { padding-left: 11px; gap: 8px; }
.big-cf + .big-fat { margin-left: 7px; }
.big-sort { width: 98px; }
.big-find { width: 100px; }
.big-sort .big-ic, .big-find .big-ic { padding-left: 10px; gap: 12px; }
.big-one { width: 100%; }
.big-one .big-ic { justify-content: center; }

.clip-tools {
    margin-left: 4px;
}
.clip-row {
    display: flex;
    align-items: center;
    gap: 8px;
    height: 40px;
    margin-bottom: 4px;
}
.clip-ic {
    display: flex;
    justify-content: center;
    width: 40px;
}

.r1 {
    display: flex;
    align-items: center;
    height: 48px;
    margin-top: 8px;
}
.r2 {
    display: flex;
    align-items: center;
    height: 46px;
    margin-top: 18px;
}
.select {
    display: flex;
    align-items: center;
    justify-content: space-between;
    height: 48px;
    padding: 0 9px 0 13px;
    border-radius: 8px;
    background: #333;
    box-shadow: inset 0 0 0 1px #3d3d3d;
    border-bottom: 2px solid #4a4a4a;
    font-size: 24px;
    color: #f2f2f2;
}
.sel-font { width: 282px; }
.sel-size { width: 107px; margin-left: 4px; }
.sel-num { width: 309px; }
.grow { margin-left: 15px; }
.shrink { margin-left: 23px; }
.ict-a { font-size: 36px; font-weight: 300; fill: #cfcfcf; text-anchor: middle; }
.ict-a2 { font-size: 32px; font-weight: 300; fill: #cfcfcf; text-anchor: middle; }
.ict-a3 { font-size: 29px; font-weight: 300; fill: #cfcfcf; text-anchor: middle; }
.ict-ab { font-size: 24px; font-weight: 300; fill: #cfcfcf; }
.ict-wrap { font-size: 19px; font-weight: 300; fill: #cfcfcf; }
.ict-dec { font-size: 19px; font-weight: 300; fill: #cfcfcf; }
.ict-az { font-size: 34px; font-weight: 300; fill: #4a90d9; text-anchor: middle; }
.ict-z { font-size: 34px; font-weight: 300; fill: #cfcfcf; text-anchor: middle; }

.tb, .tb-h {
    display: flex;
    align-items: center;
    justify-content: center;
    flex: none;
}
.tb { height: 46px; }
.tb-h { height: 48px; }
.w24 { width: 24px; }
.w26 { width: 26px; }
.w28 { width: 28px; }
.w34 { width: 34px; }
.w46 { width: 46px; }
.w48 { width: 48px; }
.w50 { width: 50px; }
.w52 { width: 52px; }
.w54 { width: 54px; }
.w56 { width: 56px; }
.mg4 { margin-left: 4px; }
.mg-4 { margin-left: -2px; }
.vsep {
    width: 2px;
    height: 36px;
    background: #4a4a4a;
}
.active {
    display: flex;
    justify-content: center;
    width: 48px;
    height: 48px;
    border-radius: 8px;
    background: #464646;
}
.t-b { font-size: 27px; font-weight: 700; color: #c8c8c8; }
.t-i { font-family: "Liberation Serif", serif; font-style: italic; font-size: 29px; color: #c8c8c8; }
.t-u { font-size: 25px; font-weight: 300; color: #c8c8c8; }
.t-pct { font-size: 38px; font-weight: 300; color: #c8c8c8; }
.t-comma { font-family: "Liberation Serif", serif; font-weight: 700; font-size: 68px; line-height: 1; color: #c8c8c8; padding-bottom: 32px; }

.wrap-row {
    display: flex;
    align-items: center;
    height: 46px;
}
.wr-1 {
    height: 48px;
    margin-top: 8px;
    padding-left: 29px;
    gap: 13px;
    color: #f2f2f2;
}
.wr-1 .chev { margin-left: -1px; }
.wr-2 {
    margin-top: 18px;
    padding-left: 24px;
    gap: 15px;
    color: #8a8a8a;
}
.wr-2 .chev { color: #8a8a8a; margin-left: 1px; }

.cell-row {
    display: flex;
    align-items: center;
    gap: 12px;
    height: 40px;
    margin-bottom: 4px;
    padding-left: 26px;
    color: #f0f0f0;
}
.edit-col {
    width: 90px;
}
.edit-row {
    display: flex;
    align-items: center;
    gap: 12px;
    height: 40px;
    margin-bottom: 4px;
    padding-left: 26px;
}
.edit-ic {
    display: flex;
    justify-content: center;
    width: 32px;
}

/* ---- formula bar ---- */
.formula {
    display: flex;
    align-items: center;
    height: 54px;
    border-top: 2px solid #000;
    background: #282828;
    padding-right: 4px;
}
.namebox {
    display: flex;
    align-items: center;
    justify-content: space-between;
    width: 170px;
    height: 100%;
    padding: 0 2px 0 20px;
    border-right: 2px solid #3f3f3f;
    font-size: 24px;
    color: #e8e8e8;
}
.spin i { margin: 4px 0; }
.spin-up {
    width: 0;
    height: 0;
    border: 7px solid transparent;
    border-top: 0;
    border-bottom: 11px solid #bdbdbd;
}
.spin-down {
    width: 0;
    height: 0;
    border: 7px solid transparent;
    border-bottom: 0;
    border-top: 11px solid #bdbdbd;
}
.f-x { margin-left: 29px; }
.f-ok { margin-left: 33px; }
.f-fx {
    margin-left: 17px;
    font-family: "Liberation Serif", serif;
    font-style: italic;
    font-size: 36px;
    color: #8a8a8a;
}
.f-chev { margin-left: 11px; }
.f-input {
    flex: 1;
    height: 40px;
    margin-left: 6px;
    padding-left: 15px;
    line-height: 40px;
    border-radius: 6px 0 0 6px;
    background: #383838;
    font-size: 23px;
    color: #e8e8e8;
}
.f-expand {
    display: flex;
    align-items: center;
    justify-content: center;
    width: 43px;
    height: 38px;
    background: #202020;
    border-radius: 4px;
}
.f-expand i {
    width: 0;
    height: 0;
    border: 7px solid transparent;
    border-bottom: 0;
    border-top: 13px solid #bdbdbd;
}
.formula-line {
    height: 3px;
    background: #cfcfcf;
}

/* ---- sheet ---- */
.sheet {
    position: relative;
    height: 1343px;
    overflow: hidden;
    background: #fff;
}
.grid {
    table-layout: fixed;
    width: 2950px;
    border-collapse: separate;
    border-spacing: 0;
    font-family: Lato, "Open Sans", sans-serif;
}
.c-rh { width: 72px; }
.c-a { width: 302px; }
.c-b { width: 232px; }
.c-c { width: 224px; }
.c-d { width: 329px; }
.c-e { width: 343px; }
.c-f { width: 368px; }
.c-g { width: 181px; }
.c-n { width: 179.6px; }
.grid td {
    height: 52px;
    padding: 0 8px;
    border-right: 2px solid #d6d6d6;
    border-bottom: 2px solid #d6d6d6;
    font-size: 32px;
    letter-spacing: -0.7px;
    color: #000;
    white-space: nowrap;
    overflow: visible;
}
.grid th {
    padding: 0;
    font-weight: 400;
    background: #171717;
    color: #fff;
    font-size: 31px;
}
.heads th {
    height: 76px;
    border-right: 2px solid #555;
    border-bottom: 3px solid #aaa;
}
.heads .corner { padding: 0 0 0 8px; vertical-align: bottom; border-right: 0; }
.heads .corner svg { margin-bottom: 3px; }
.heads .h-sel {
    background: #5a5a5a;
    border-right: 0;
    border-bottom: 4px solid #3a7149;
}
.rh {
    border-bottom: 2px solid #3c3c3c;
}
.rh-sel.rh {
    background: #5a5a5a;
    border-right: 3px solid #3a7149;
}
.row1 td {
    height: 53px;
}
.row16 td {
    height: 70px;
}
.grid .hc {
    position: relative;
    background: #2c4e78;
    color: #fff;
    font-weight: 700;
    font-size: 33px;
    text-align: center;
    border: 0;
}
.filter {
    position: absolute;
    right: 1px;
    bottom: 4px;
    display: flex;
    align-items: center;
    justify-content: center;
    width: 32px;
    height: 31px;
    background: #f2f2f2;
    box-shadow: 0 0 0 1px #1d3555;
    border-radius: 2px;
}
.filter::after {
    content: "";
    width: 0;
    height: 0;
    border: 9px solid transparent;
    border-bottom: 0;
    border-top: 12px solid #7f7f7f;
}
.grid .band td {
    background: #ebf1de;
    border-bottom-color: #c8d6a2;
    border-right-color: #ebf1de;
}
.grid .plain td {
    border-bottom-color: #c8d6a2;
}
.grid .band td:nth-child(6), .grid .plain td:nth-child(6) {
    border-right-color: #c8d6a2;
}
.grid .band td:nth-child(n+7) {
    background: #fff;
    border-bottom-color: #d6d6d6;
    border-right-color: #d6d6d6;
}
.grid .plain td:nth-child(n+7) {
    border-bottom-color: #d6d6d6;
}
.grid .e {
    position: relative;
    text-align: right;
}
.grid .e-1 { padding-right: 93px; }
.grid .e-2 { padding-right: 77px; }
.grid .e-3 { padding-right: 21px; }
.grid .e-4 { padding-right: 128px; }
.tbl-end {
    position: absolute;
    right: -2px;
    bottom: -1px;
    width: 12px;
    height: 12px;
    background: #4a54b5;
    clip-path: polygon(100% 0, 100% 100%, 0 100%, 0 50%, 50% 50%, 50% 0);
}
.cur {
    position: relative;
}
.cur-box {
    position: absolute;
    left: -2px;
    top: -3px;
    right: -2px;
    bottom: -3px;
    border: 4px solid #3a7149;
}
.cur-note {
    position: absolute;
    right: 3px;
    top: 3px;
    width: 33px;
    height: 30px;
    background: #6a63cf;
    clip-path: polygon(0 0, 100% 0, 100% 100%, 45% 47%, 0 47%);
}
.cur-handle {
    position: absolute;
    right: -4px;
    bottom: -5px;
    width: 10px;
    height: 10px;
    background: #3a7149;
    box-shadow: 0 0 0 1px #fff;
}

/* ---- comment popup ---- */
.popup {
    position: absolute;
    left: 856px;
    top: 116px;
    width: 484px;
    height: 344px;
    border-radius: 38px;
    background: #282828;
    border: 2px solid #5a5a5a;
    box-shadow: 0 0 0 1px #1f1f1f, 0 18px 50px rgba(0, 0, 0, 0.32);
    color: #f0f0f0;
    font-family: Inter, "Noto Sans", sans-serif;
}
.popup::before {
    content: "";
    position: absolute;
    left: -19px;
    top: 153px;
    width: 34px;
    height: 34px;
    transform: rotate(45deg);
    border-radius: 6px;
    background: #484848;
    box-shadow: 0 0 0 1px #4d4860;
}
.pop-top {
    position: relative;
    height: 239px;
    padding: 29px 0 0 18px;
    border-radius: 36px 36px 0 0;
    background: #383838;
}
.pop-head {
    display: flex;
    align-items: center;
}
.pop-av {
    display: flex;
    align-items: center;
    justify-content: center;
    width: 48px;
    height: 48px;
    border-radius: 50%;
    background: #4a4a4a;
    font-size: 20px;
    color: #d0d0d0;
}
.pop-name {
    width: 298px;
    margin-left: 20px;
    font-size: 23px;
    font-weight: 700;
}
.pop-cell {
    width: 53px;
    font-size: 22px;
}
.pop-dots {
    display: flex;
    gap: 6px;
}
.pop-dots i {
    width: 5px;
    height: 5px;
    border-radius: 50%;
    background: #505050;
}
.pop-body {
    margin: 0 0 0 75px;
    padding-top: 0;
    margin-top: 0;
    font-size: 22px;
    line-height: 32px;
}
.pop-date {
    margin: 16px 0 0 68px;
    font-size: 22px;
    line-height: 30px;
}
.pop-bottom {
    display: flex;
    align-items: center;
    height: 99px;
    padding: 0 0 0 23px;
    border-top: 4px solid #000;
}
.pop-input {
    display: flex;
    align-items: center;
    width: 386px;
    height: 60px;
    padding-left: 15px;
    border-radius: 8px;
    background: #464646;
    font-size: 23px;
    color: #d8d8d8;
}
.thumb { margin-left: 8px; margin-bottom: 8px; }
.caret {
    width: 3px;
    height: 32px;
    margin-left: 1px;
    margin-bottom: 4px;
    background: #ddd;
}
.send {
    margin-left: auto;
    margin-right: 8px;
    margin-top: 12px;
}
.pop-close {
    margin-left: 21px;
    margin-top: 10px;
}

/* ---- sheet tabs ---- */
.sheettabs {
    display: flex;
    align-items: center;
    height: 54px;
    border-top: 2px solid #8a8a8a;
    border-bottom: 2px solid #000;
    background: #333;
}
.arrow-l {
    width: 0;
    height: 0;
    margin-left: 29px;
    border: 11px solid transparent;
    border-left: 0;
    border-right: 15px solid #6e6e6e;
}
.arrow-r {
    width: 0;
    height: 0;
    margin-left: 32px;
    border: 11px solid transparent;
    border-right: 0;
    border-left: 15px solid #6e6e6e;
}
.sheet-tab {
    display: flex;
    align-items: center;
    justify-content: center;
    align-self: flex-start;
    width: 306px;
    height: 45px;
    margin-left: 31px;
    padding-top: 6px;
    border-radius: 0 0 8px 8px;
    border-bottom: 2px solid #777;
    background: #fff;
    font-size: 24px;
    font-weight: 700;
    color: #3f8155;
}
.sheet-add {
    width: 50px;
    margin-left: 3px;
    text-align: center;
    font-size: 36px;
    font-weight: 500;
    color: #b0b0b0;
}
.sheet-sep {
    width: 2px;
    height: 42px;
    margin-left: 22px;
    background: #5a5a5a;
}

/* ---- status bar ---- */
.status {
    display: flex;
    align-items: center;
    height: 54px;
    padding-left: 49px;
    background: #282828;
    font-size: 23px;
    color: #dcdcdc;
}
.st-rec { margin-left: 42px; }
.st-acc { margin-left: 42px; }
.st-text { margin-left: 12px; }
.st-right {
    display: flex;
    align-items: center;
    margin-left: auto;
    height: 100%;
    padding-right: 49px;
}
.view-on {
    display: flex;
    align-items: center;
    justify-content: center;
    width: 62px;
    height: 44px;
    border-radius: 6px;
    background: #636363;
}
.view-page { margin-left: 30px; }
.view-break { margin-left: 45px; }
.zoom-minus {
    margin-left: 33px;
    font-size: 28px;
    color: #fff;
}
.zoom-track {
    position: relative;
    width: 200px;
    height: 8px;
    margin-left: 14px;
    border-radius: 4px;
    background: #6b6b6b;
}
.zoom-tick {
    position: absolute;
    left: 96px;
    top: -2px;
    width: 12px;
    height: 12px;
    border-radius: 50%;
    background: #333;
}
.zoom-thumb {
    position: absolute;
    left: 102px;
    top: -10px;
    width: 36px;
    height: 28px;
    border-radius: 12px;
    background: #e0e0e0;
}
.zoom-plus {
    margin-left: 13px;
    font-size: 30px;
    color: #fff;
}
.zoom-val {
    margin-left: 33px;
    font-size: 24px;
    color: #e8e8e8;
}
```
